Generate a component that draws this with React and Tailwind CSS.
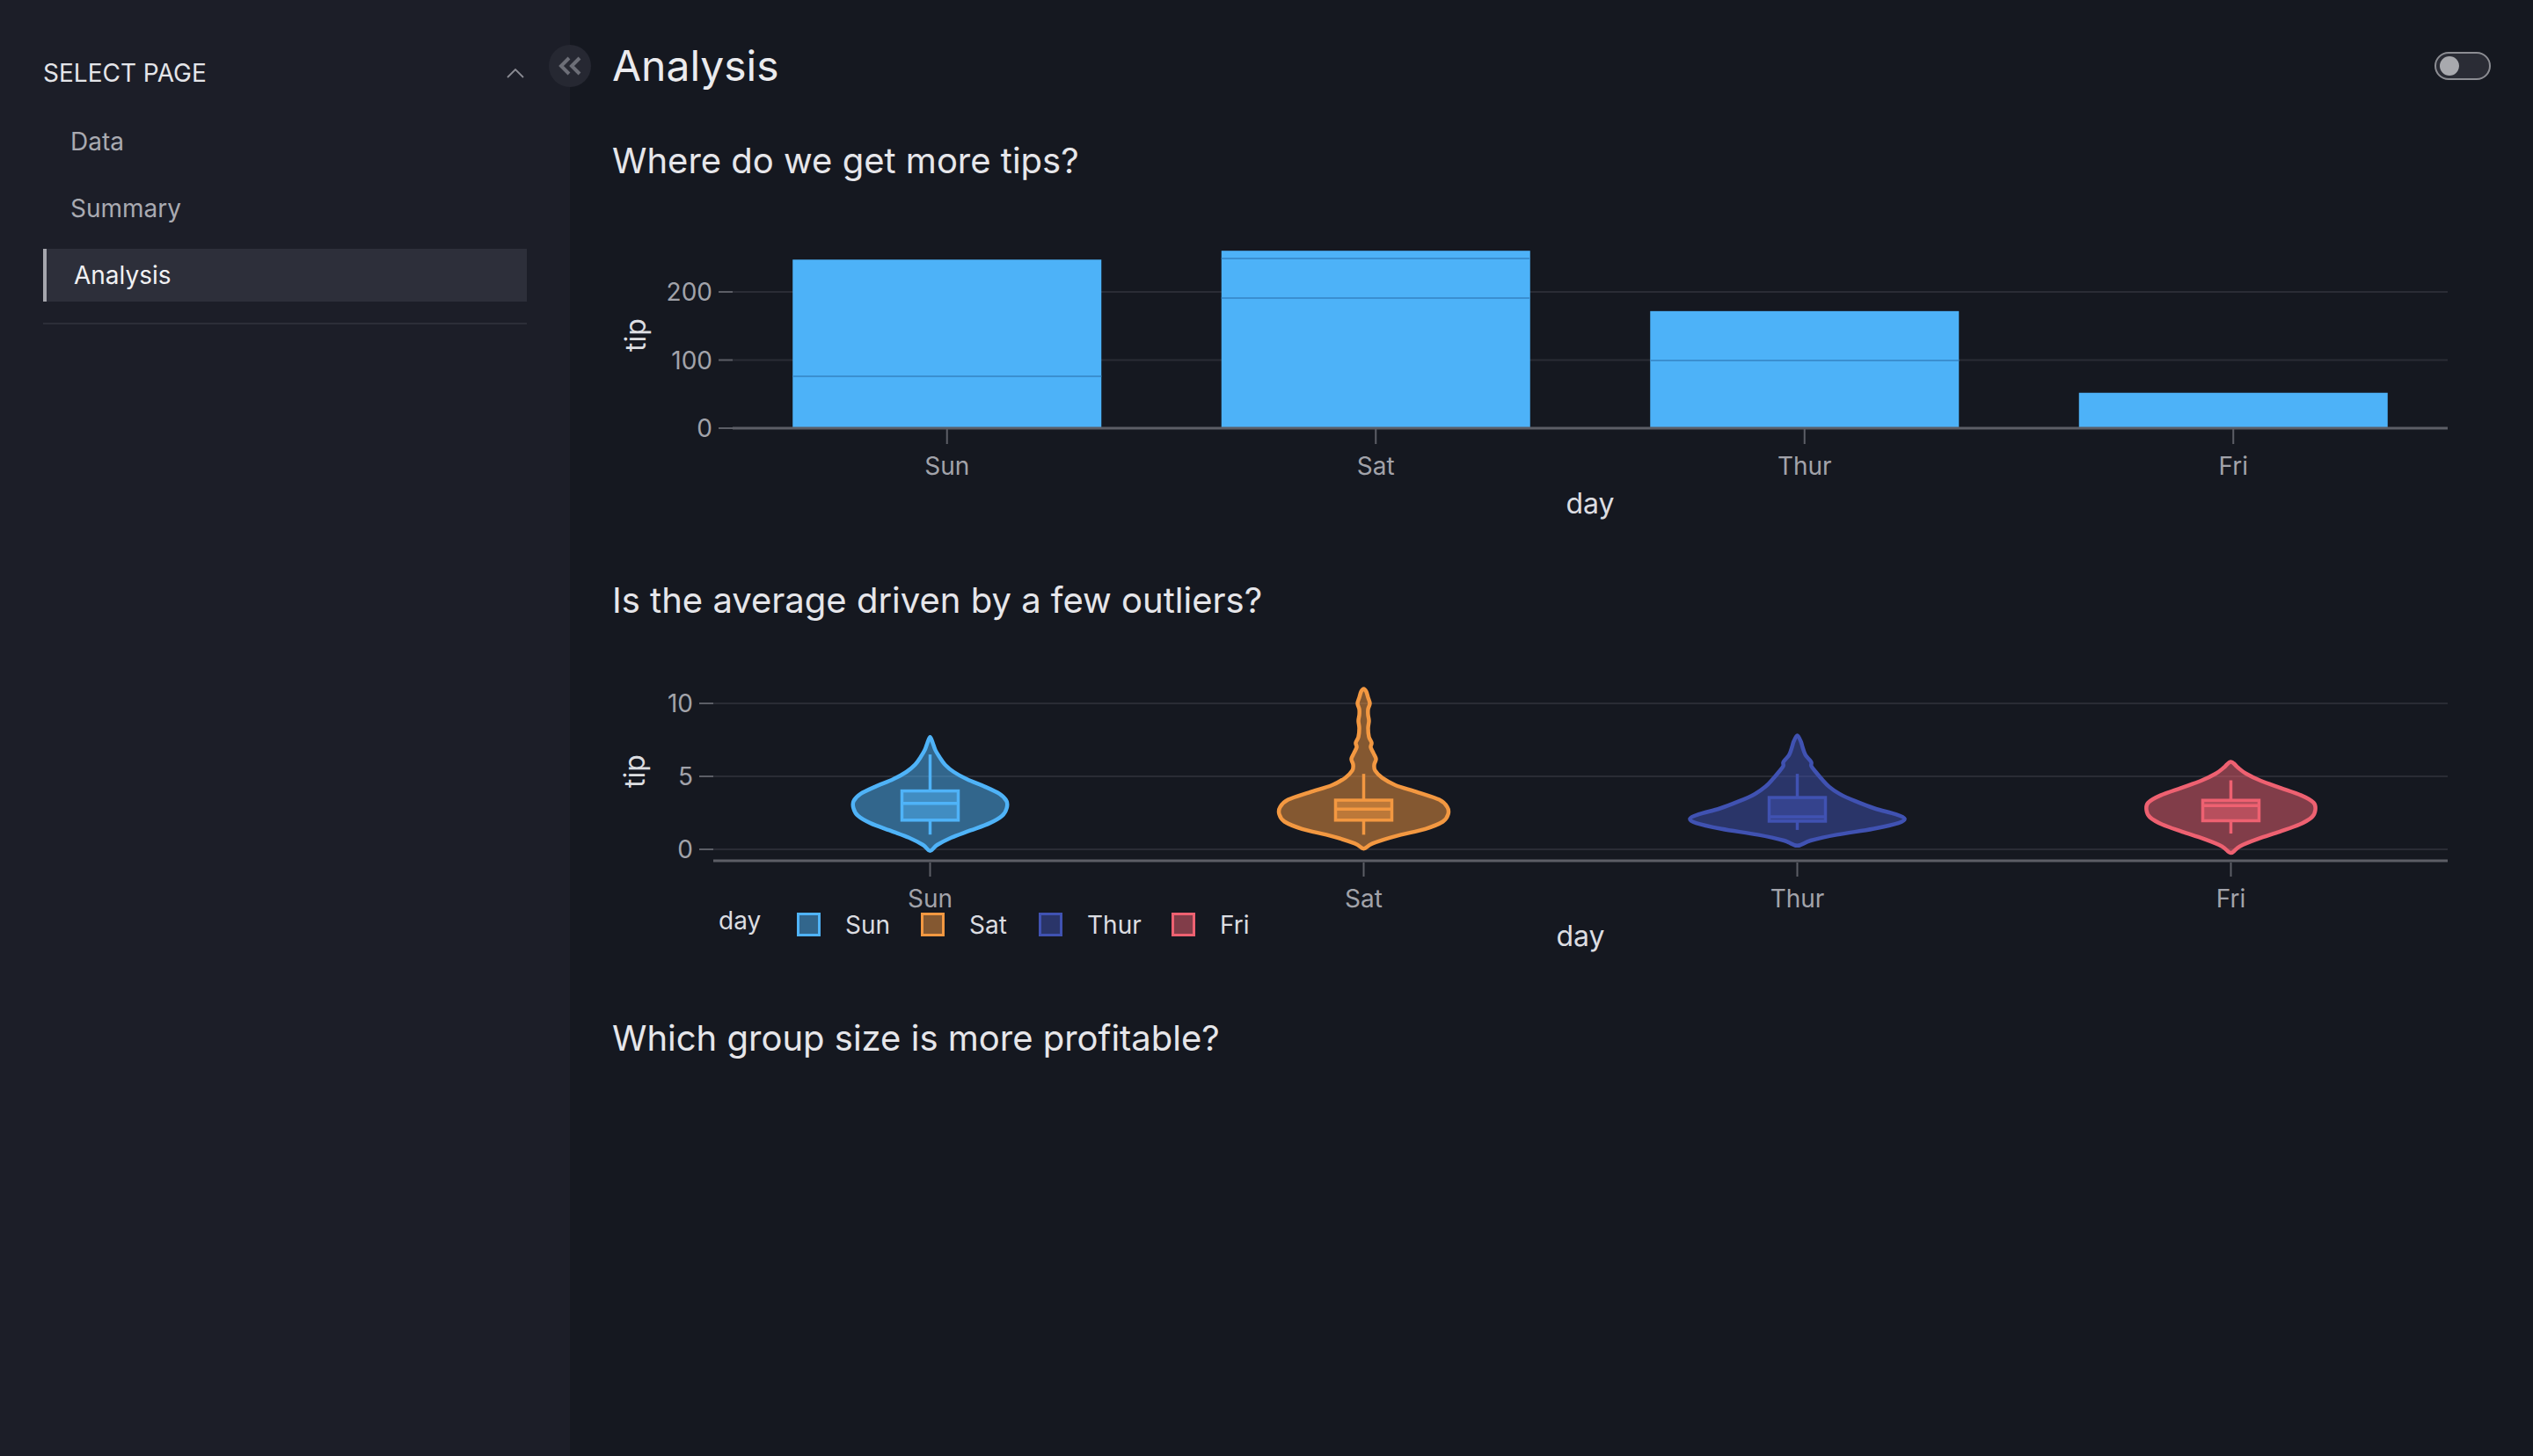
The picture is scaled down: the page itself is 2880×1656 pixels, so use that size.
import React from 'react';

const FONT = 'Inter, sans-serif';

// tips summed per day (bar chart)
const tipBars = [
  { day: 'Sun', total: 247.39, seams: [76] },
  { day: 'Sat', total: 260.4, seams: [249, 191] },
  { day: 'Thur', total: 171.83, seams: [99.4] },
  { day: 'Fri', total: 51.96, seams: [] },
];

// violin profiles: [tip value, half width in px]
const violins = [
  {
    day: 'Sun',
    stroke: '#4fb3f8',
    profile: [[-0.1, 0], [0.3, 8], [0.8, 24], [1.3, 46], [1.8, 68], [2.3, 82], [2.8, 87], [3.3, 87], [3.8, 79], [4.3, 62], [4.8, 42], [5.3, 27], [5.8, 17], [6.3, 11], [6.8, 6], [7.3, 3], [7.7, 0]],
    box: { q1: 2.0, q3: 4.0, med: 3.15, lo: 1.01, hi: 6.5 },
  },
  {
    day: 'Sat',
    stroke: '#f39841',
    profile: [[0.05, 0], [0.4, 10], [0.9, 36], [1.4, 70], [1.9, 90], [2.4, 96], [2.9, 95], [3.4, 86], [3.9, 62], [4.4, 36], [4.9, 21], [5.4, 13], [5.8, 12], [6.2, 14], [6.6, 11], [7.0, 8], [7.3, 9], [7.7, 6], [8.3, 5], [8.8, 6], [9.2, 5], [9.6, 5], [10.0, 7], [10.4, 5], [10.8, 3], [11.0, 0]],
    box: { q1: 2.0, q3: 3.37, med: 2.75, lo: 1.0, hi: 5.17 },
  },
  {
    day: 'Thur',
    stroke: '#4052b2',
    profile: [[0.25, 0], [0.6, 15], [1.0, 45], [1.4, 86], [1.8, 115], [2.1, 122], [2.4, 112], [2.8, 88], [3.3, 66], [3.8, 48], [4.3, 36], [4.8, 28], [5.3, 21], [5.7, 16], [5.95, 16], [6.2, 13], [6.5, 9], [7.0, 6], [7.4, 4], [7.8, 0]],
    box: { q1: 1.93, q3: 3.55, med: 2.23, lo: 1.33, hi: 5.17 },
  },
  {
    day: 'Fri',
    stroke: '#ee6171',
    profile: [[-0.25, 0], [0.2, 10], [0.7, 30], [1.2, 55], [1.7, 78], [2.2, 92], [2.7, 96], [3.2, 94], [3.7, 80], [4.2, 57], [4.7, 34], [5.2, 17], [5.6, 8], [6.0, 0]],
    box: { q1: 1.96, q3: 3.36, med: 3.0, lo: 1.08, hi: 4.73 },
  },
];

const catmull = (pts) => {
  const n = pts.length;
  let d = `M ${pts[0][0].toFixed(1)} ${pts[0][1].toFixed(1)}`;
  for (let i = 0; i < n; i++) {
    const p0 = pts[(i - 1 + n) % n];
    const p1 = pts[i];
    const p2 = pts[(i + 1) % n];
    const p3 = pts[(i + 2) % n];
    const c1 = [p1[0] + (p2[0] - p0[0]) / 6, p1[1] + (p2[1] - p0[1]) / 6];
    const c2 = [p2[0] - (p3[0] - p1[0]) / 6, p2[1] - (p3[1] - p1[1]) / 6];
    d += ` C ${c1[0].toFixed(1)} ${c1[1].toFixed(1)} ${c2[0].toFixed(1)} ${c2[1].toFixed(1)} ${p2[0].toFixed(1)} ${p2[1].toFixed(1)}`;
  }
  return d + ' Z';
};

const violinPath = (cx, profile, vy) => {
  const right = profile.map(([v, w]) => [cx + w, vy(v)]);
  const left = profile
    .slice(1, -1)
    .reverse()
    .map(([v, w]) => [cx - w, vy(v)]);
  return catmull([...right, ...left]);
};

const BarChart = () => {
  const x0 = 137;
  const x1 = 2087;
  const zero = 276;
  const k = 0.775;
  const cw = (x1 - x0) / 4;
  const y = (v) => zero - v * k;

  return (
    <svg width={2136} height={444} className="block">
      {[100, 200].map((t) => (
        <g key={t}>
          <line x1={x0} x2={x1} y1={y(t)} y2={y(t)} stroke="#2a2c35" strokeWidth={2} />
          <line x1={121} x2={x0} y1={y(t)} y2={y(t)} stroke="#5c5e66" strokeWidth={2} />
          <text x={114} y={y(t)} textAnchor="end" dominantBaseline="central" fill="#a2a3aa" fontSize={28} fontFamily={FONT}>
            {t}
          </text>
        </g>
      ))}
      <line x1={121} x2={x0} y1={zero} y2={zero} stroke="#5c5e66" strokeWidth={2} />
      <text x={114} y={zero} textAnchor="end" dominantBaseline="central" fill="#a2a3aa" fontSize={28} fontFamily={FONT}>
        0
      </text>

      {tipBars.map((b, i) => {
        const cx = x0 + cw * (i + 0.5);
        return (
          <g key={b.day}>
            <rect x={cx - 175.5} y={y(b.total)} width={351} height={zero - y(b.total)} fill="#4db2f8" />
            {b.seams.map((s) => (
              <line key={s} x1={cx - 175.5} x2={cx + 175.5} y1={y(s)} y2={y(s)} stroke="#3a8fd0" strokeWidth={2} />
            ))}
            <line x1={cx} x2={cx} y1={zero} y2={294} stroke="#5c5e66" strokeWidth={2} />
            <text x={cx} y={319} textAnchor="middle" dominantBaseline="central" fill="#a2a3aa" fontSize={28} fontFamily={FONT}>
              {b.day}
            </text>
          </g>
        );
      })}
      <line x1={x0} x2={x1} y1={zero} y2={zero} stroke="#5c5e66" strokeWidth={3} />

      <text x={(x0 + x1) / 2} y={361} textAnchor="middle" dominantBaseline="central" fill="#dcdde1" fontSize={32} fontFamily={FONT}>
        day
      </text>
      <text
        x={26}
        y={170}
        textAnchor="middle"
        dominantBaseline="central"
        fill="#dcdde1"
        fontSize={32}
        fontFamily={FONT}
        transform="rotate(-90 26 170)"
      >
        tip
      </text>
    </svg>
  );
};

const ViolinChart = () => {
  const x0 = 115;
  const x1 = 2087;
  const zero = 255;
  const k = 16.6;
  const cw = (x1 - x0) / 4;
  const vy = (v) => zero - v * k;
  const legendX = [210, 351, 485, 636];

  return (
    <svg width={2136} height={442} className="block">
      {[0, 5, 10].map((t) => (
        <g key={t}>
          <line x1={x0} x2={x1} y1={vy(t)} y2={vy(t)} stroke="#2a2c35" strokeWidth={2} />
          <line x1={99} x2={x0} y1={vy(t)} y2={vy(t)} stroke="#5c5e66" strokeWidth={2} />
          <text x={92} y={vy(t)} textAnchor="end" dominantBaseline="central" fill="#a2a3aa" fontSize={28} fontFamily={FONT}>
            {t}
          </text>
        </g>
      ))}
      <line x1={x0} x2={x1} y1={268} y2={268} stroke="#5c5e66" strokeWidth={3} />

      {violins.map((v, i) => {
        const cx = x0 + cw * (i + 0.5);
        const b = v.box;
        return (
          <g key={v.day}>
            <path d={violinPath(cx, v.profile, vy)} fill={v.stroke} fillOpacity={0.5} stroke={v.stroke} strokeWidth={4.5} strokeLinejoin="round" />
            <line x1={cx} x2={cx} y1={vy(b.hi)} y2={vy(b.q3)} stroke={v.stroke} strokeWidth={3.5} />
            <line x1={cx} x2={cx} y1={vy(b.q1)} y2={vy(b.lo)} stroke={v.stroke} strokeWidth={3.5} />
            <rect x={cx - 32} y={vy(b.q3)} width={64} height={vy(b.q1) - vy(b.q3)} fill={v.stroke} fillOpacity={0.5} stroke={v.stroke} strokeWidth={3.5} />
            <line x1={cx - 32} x2={cx + 32} y1={vy(b.med)} y2={vy(b.med)} stroke={v.stroke} strokeWidth={3.5} />
            <line x1={cx} x2={cx} y1={270} y2={286} stroke="#5c5e66" strokeWidth={2} />
            <text x={cx} y={311} textAnchor="middle" dominantBaseline="central" fill="#a2a3aa" fontSize={28} fontFamily={FONT}>
              {v.day}
            </text>
          </g>
        );
      })}

      <text x={121} y={336} dominantBaseline="central" fill="#dcdde1" fontSize={28} fontFamily={FONT}>
        day
      </text>
      {violins.map((v, i) => (
        <g key={v.day}>
          <rect x={legendX[i] + 1.5} y={328.5} width={24} height={24} fill={v.stroke} fillOpacity={0.5} stroke={v.stroke} strokeWidth={3} />
          <text x={legendX[i] + 55} y={341} dominantBaseline="central" fill="#dcdde1" fontSize={28} fontFamily={FONT}>
            {v.day}
          </text>
        </g>
      ))}

      <text x={(x0 + x1) / 2} y={353} textAnchor="middle" dominantBaseline="central" fill="#dcdde1" fontSize={32} fontFamily={FONT}>
        day
      </text>
      <text
        x={25}
        y={166}
        textAnchor="middle"
        dominantBaseline="central"
        fill="#dcdde1"
        fontSize={32}
        fontFamily={FONT}
        transform="rotate(-90 25 166)"
      >
        tip
      </text>
    </svg>
  );
};

const pages = ['Data', 'Summary', 'Analysis'];

export default function App() {
  return (
    <div className="flex min-h-screen w-full bg-[#151820] font-['Inter',sans-serif]">
      {/* Sidebar */}
      <aside className="relative w-[648px] shrink-0 bg-[#1c1e28] px-[49px] pt-[59px]">
        <div className="flex h-[48px] items-center justify-between">
          <span className="text-[28px] uppercase text-[#e4e5e9]">Select page</span>
          <svg width="20" height="11" viewBox="0 0 20 11" className="mr-[3px]">
            <path d="M1 10 L10 1 L19 10" fill="none" stroke="#8a8b93" strokeWidth="1.8" />
          </svg>
        </div>
        <nav className="mt-[24px] flex flex-col gap-[16px]">
          {pages.map((p) =>
            p === 'Analysis' ? (
              <div key={p} className="flex h-[60px] items-center border-l-[4px] border-[#a5a6ad] bg-[#2d2f3a] pl-[31px] text-[28px] text-[#f1f1f3]">
                {p}
              </div>
            ) : (
              <div key={p} className="flex h-[60px] items-center pl-[31px] text-[28px] text-[#a9aab1]">
                {p}
              </div>
            )
          )}
        </nav>
        <div className="mt-[24px] h-[2px] bg-[#2c2e38]" />

        <button className="absolute right-[-24px] top-[51px] z-10 flex h-[48px] w-[48px] items-center justify-center rounded-full bg-[#262832]">
          <svg width="28" height="22" viewBox="0 0 28 22">
            <path d="M13 2 L4 11 L13 20 M25 2 L16 11 L25 20" fill="none" stroke="#6c6e77" strokeWidth="4" />
          </svg>
        </button>
      </aside>

      {/* Main */}
      <main className="flex-1 pl-[48px] pr-[48px] pt-[43px]">
        <div className="flex h-[64px] items-center justify-between">
          <h1 className="text-[48px] leading-[64px] text-[#ebebee]">Analysis</h1>
          <div className="flex h-[32px] w-[64px] items-center rounded-full border-2 border-[#8c8d93] bg-[#2a2c35] pl-[4px]">
            <div className="h-[22px] w-[22px] rounded-full bg-[#a8a9ae]" />
          </div>
        </div>

        <h2 className="mt-[48px] text-[40px] leading-[56px] text-[#e6e6ea]">Where do we get more tips?</h2>
        <BarChart />

        <h2 className="text-[40px] leading-[56px] text-[#e6e6ea]">Is the average driven by a few outliers?</h2>
        <ViolinChart />

        <h2 className="text-[40px] leading-[56px] text-[#e6e6ea]">Which group size is more profitable?</h2>
      </main>
    </div>
  );
}
